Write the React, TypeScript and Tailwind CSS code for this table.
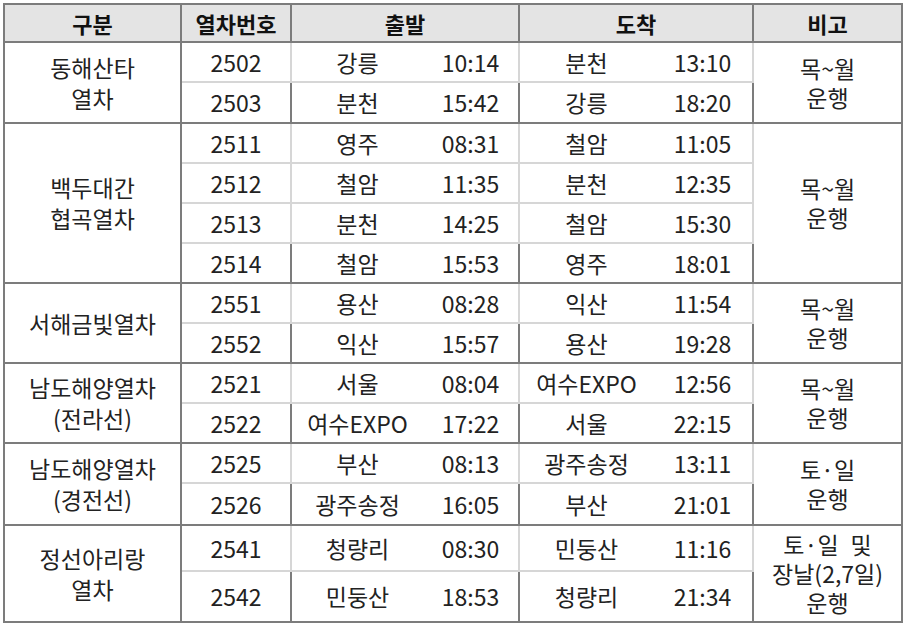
const groups = [
  {
    name: ['동해산타', '열차'],
    note: ['목~월', '운행'],
    rows: [
      { no: '2502', from: '강릉', dep: '10:14', to: '분천', arr: '13:10', h: 'h-[40px]' },
      { no: '2503', from: '분천', dep: '15:42', to: '강릉', arr: '18:20', h: 'h-[41px]' },
    ],
  },
  {
    name: ['백두대간', '협곡열차'],
    note: ['목~월', '운행'],
    rows: [
      { no: '2511', from: '영주', dep: '08:31', to: '철암', arr: '11:05', h: 'h-[40px]' },
      { no: '2512', from: '철암', dep: '11:35', to: '분천', arr: '12:35', h: 'h-[40px]' },
      { no: '2513', from: '분천', dep: '14:25', to: '철암', arr: '15:30', h: 'h-[40px]' },
      { no: '2514', from: '철암', dep: '15:53', to: '영주', arr: '18:01', h: 'h-[40px]' },
    ],
  },
  {
    name: ['서해금빛열차'],
    note: ['목~월', '운행'],
    rows: [
      { no: '2551', from: '용산', dep: '08:28', to: '익산', arr: '11:54', h: 'h-[40px]' },
      { no: '2552', from: '익산', dep: '15:57', to: '용산', arr: '19:28', h: 'h-[40px]' },
    ],
  },
  {
    name: ['남도해양열차', '(전라선)'],
    note: ['목~월', '운행'],
    rows: [
      { no: '2521', from: '서울', dep: '08:04', to: '여수EXPO', arr: '12:56', h: 'h-[40px]' },
      { no: '2522', from: '여수EXPO', dep: '17:22', to: '서울', arr: '22:15', h: 'h-[40px]' },
    ],
  },
  {
    name: ['남도해양열차', '(경전선)'],
    note: ['토·일', '운행'],
    rows: [
      { no: '2525', from: '부산', dep: '08:13', to: '광주송정', arr: '13:11', h: 'h-[40px]' },
      { no: '2526', from: '광주송정', dep: '16:05', to: '부산', arr: '21:01', h: 'h-[42px]' },
    ],
  },
  {
    name: ['정선아리랑', '열차'],
    note: ['토·일 및', '장날(2,7일)', '운행'],
    rows: [
      { no: '2541', from: '청량리', dep: '08:30', to: '민둥산', arr: '11:16', h: 'h-[46px]' },
      { no: '2542', from: '민둥산', dep: '18:53', to: '청량리', arr: '21:34', h: 'h-[51px]' },
    ],
  },
];

const dark = 'border-[#7c7c7c]';

export default function App() {
  return (
    <div className="bg-white w-[907px] h-[626px] pt-[3px] pl-[3px] text-[#222] font-['Noto_Sans_CJK_KR','Noto_Sans',sans-serif] text-[23px]">
      <table className={`table-fixed border-collapse border-2 ${dark} w-[900px]`}>
        <colgroup>
          <col className="w-[177px]" />
          <col className="w-[110px]" />
          <col className="w-[132px]" />
          <col className="w-[96px]" />
          <col className="w-[134px]" />
          <col className="w-[100px]" />
          <col className="w-[149px]" />
        </colgroup>
        <thead>
          <tr className="h-[38px] bg-[#e4e4e4] text-[#111] text-[22px]">
            <th className={`border-r-2 border-b-2 ${dark} font-bold`}>구분</th>
            <th className={`border-r-2 border-b-2 ${dark} font-bold`}>열차번호</th>
            <th colSpan={2} className={`border-r-2 border-b-2 ${dark} font-bold`}>출발</th>
            <th colSpan={2} className={`border-r-2 border-b-2 ${dark} font-bold`}>도착</th>
            <th className={`border-b-2 ${dark} font-bold`}>비고</th>
          </tr>
        </thead>
        <tbody>
          {groups.map((g) =>
            g.rows.map((r, i) => {
              const last = i === g.rows.length - 1;
              const line = last ? `border-b-2 ${dark}` : 'border-b-2 border-[#d6d6d6]';
              return (
                <tr key={r.no} className={r.h}>
                  {i === 0 && (
                    <td rowSpan={g.rows.length} className={`border-r-2 border-b-2 ${dark} text-center leading-[31px]`}>
                      {g.name.map((n) => (
                        <div key={n}>{n}</div>
                      ))}
                    </td>
                  )}
                  <td className={`border-r-2 ${dark} ${line} text-center`}>{r.no}</td>
                  <td className={`${line} text-center`}>{r.from}</td>
                  <td className={`border-r-2 ${dark} ${line} text-center`}>{r.dep}</td>
                  <td className={`${line} text-center`}>{r.to}</td>
                  <td className={`border-r-2 ${dark} ${line} text-center`}>{r.arr}</td>
                  {i === 0 && (
                    <td rowSpan={g.rows.length} className={`border-b-2 ${dark} text-center leading-[29px]`}>
                      {g.note.map((n) => (
                        <div key={n} className="[word-spacing:0.3em]">{n}</div>
                      ))}
                    </td>
                  )}
                </tr>
              );
            })
          )}
        </tbody>
      </table>
    </div>
  );
}
